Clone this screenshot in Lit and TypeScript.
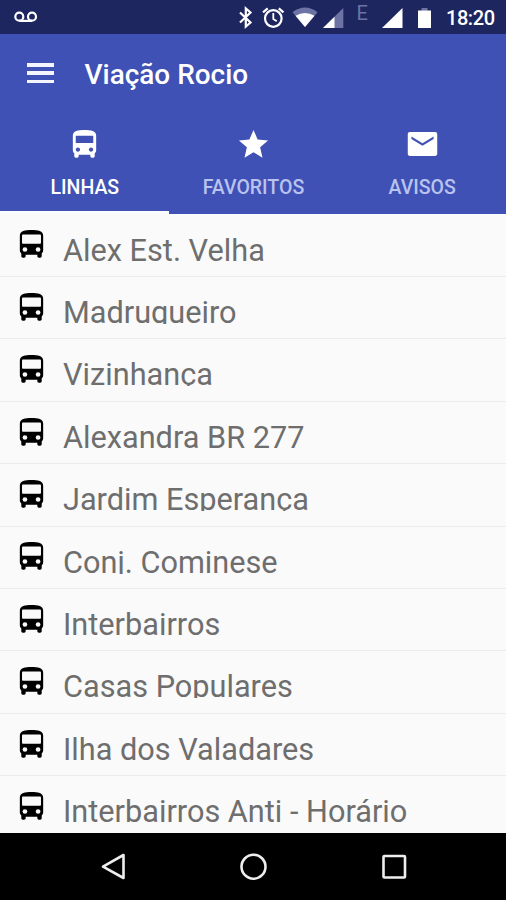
import { LitElement, html, css } from "lit";
import { customElement, property } from "lit/decorators.js";

const BUS = "M4 16c0 .88.39 1.67 1 2.22V20c0 .55.45 1 1 1h1c.55 0 1-.45 1-1v-1h8v1c0 .55.45 1 1 1h1c.55 0 1-.45 1-1v-1.78c.61-.55 1-1.34 1-2.22V6c0-3.5-3.58-4-8-4s-8 .5-8 4v10zm3.5 1c-.83 0-1.5-.67-1.5-1.5S6.67 14 7.5 14s1.5.67 1.5 1.5S8.33 17 7.5 17zm9 0c-.83 0-1.5-.67-1.5-1.5s.67-1.5 1.5-1.5 1.5.67 1.5 1.5-.67 1.5-1.5 1.5zm1.5-6H6V6h12v5z";
const STAR = "M12 17.27L18.18 21l-1.64-7.03L22 9.24l-7.19-.61L12 2 9.19 8.63 2 9.24l5.46 4.73L5.82 21z";
const MAIL = "M20.6 3.5H3.4C2.5 3.5 1.9 4.1 1.900 5v13.400c0 .9.6 1.500 1.500 1.500h17.200c.9 0 1.500-.6 1.500-1.500V5c0-.9-.6-1.500-1.500-1.500zM19.600 8.200L12 12.900 4.400 8.200V6.500L12 11.200 19.600 6.500z";

@customElement("status-bar")
export class StatusBar extends LitElement {
  static styles = css`
    :host { display: block; height: 34px; background: #1e2660; color: #fff; }
    svg { display: block; }
    text { font-family: Roboto, sans-serif; }
    .clock { font-size: 20px; font-weight: 500; }
    .net { font-size: 20px; fill: #6d74a5; }
  `;
  render() {
    return html`<svg width="506" height="34" viewBox="0 0 506 34" fill="#fff">
      <g fill="none" stroke="#fff" stroke-width="2.2">
        <circle cx="19.3" cy="16.7" r="4"></circle>
        <circle cx="32" cy="16.7" r="4"></circle>
        <path d="M19.3 20.9H32"></path>
        <path d="M240 12.5l10.5 10-4.7 4V8.5l4.7 4-10.5 10"></path>
        <circle cx="273.3" cy="18.5" r="8.3"></circle>
        <path d="M273.3 13v6l3.5 2.3" stroke-width="1.8"></path>
        <path d="M263 12.3l4.7-4M283.5 12.3l-4.7-4"></path>
      </g>
      <path d="M292.5 12.2Q305 3 317.5 12.2L305 27z" fill="#6d74a5"></path>
      <path d="M295.5 15.8Q305 10 314.5 15.8L305 27z"></path>
      <path d="M343.3 8v20H323z" fill="#6d74a5"></path>
      <path d="M334.5 16.7V28H323z"></path>
      <text class="net" x="356.5" y="19.5">E</text>
      <path d="M402.5 8v20H382z"></path>
      <path d="M421.5 8h6v3h-6z" fill="#6d74a5"></path>
      <path d="M418 10.5h13V28h-13z"></path>
      <text class="clock" x="446" y="25" textLength="49">18:20</text>
    </svg>`;
  }
}

@customElement("tab-item")
export class TabItem extends LitElement {
  @property() label = "";
  @property() path = "";
  @property({ type: Boolean, reflect: true }) active = false;
  static styles = css`
    :host { flex: 1; display: flex; flex-direction: column; align-items: center; box-sizing: border-box;
      height: 100px; padding: 13px 0 0 1px; color: #b9c3ee; font: 500 19.5px/24px Roboto, sans-serif; border-bottom: 3px solid transparent; }
    :host([active]) { color: #fff; border-bottom-color: #fcfcff; }
    svg { fill: #fff; margin-bottom: 14px; flex: none; }
  `;
  render() {
    return html`<svg width="35" height="35" viewBox="0 0 24 24"><path d=${this.path}></path></svg><span>${this.label}</span>`;
  }
}

@customElement("line-row")
export class LineRow extends LitElement {
  @property() name = "";
  static styles = css`
    :host { display: flex; box-sizing: border-box; height: 62.4px; padding-left: 14px; border-bottom: 1px solid #ececec; flex: none; }
    svg { flex: none; margin-top: 12.8px; }
    .glass, .lamp { fill: #fafafa; }
    .name { margin: 18px 0 0 14px; height: 29px; overflow: hidden; white-space: nowrap;
      color: #6e6e6e; font: 400 30.7px/36px Roboto, sans-serif; }
  `;
  render() {
    return html`<svg width="35" height="35" viewBox="0 0 24 24">
      <path d="M4 16c0 .88.39 1.67 1 2.22V20c0 .55.45 1 1 1h1c.55 0 1-.45 1-1v-1h8v1c0 .55.45 1 1 1h1c.55 0 1-.45 1-1v-1.78c.61-.55 1-1.34 1-2.22V6c0-3.5-3.58-4-8-4s-8 .5-8 4z"></path>
      <rect class="glass" x="5.5" y="5.2" width="13" height="6.2" rx=".6"></rect>
      <circle class="lamp" cx="7.5" cy="15.4" r="1.6"></circle>
      <circle class="lamp" cx="16.5" cy="15.4" r="1.6"></circle>
    </svg><span class="name">${this.name}</span>`;
  }
}

@customElement("app-root")
export class AppRoot extends LitElement {
  static styles = css`
    :host { display: flex; flex-direction: column; width: 506px; height: 900px; overflow: hidden; background: #fafafa; }
    .bar { display: flex; align-items: center; height: 80px; background: #3f51b5; flex: none; color: #fff; }
    .menu { width: 27px; height: 20px; margin: -2px 0 0 26.5px; display: flex; flex-direction: column; justify-content: space-between; }
    .menu i { height: 3.5px; background: #f4f5ff; }
    h1 { margin: 2px 0 0 31px; font: 500 27.95px/34px Roboto, sans-serif; }
    .tabs { display: flex; height: 100px; background: #3f51b5; flex: none; }
    .list { flex: 1; min-height: 0; overflow: hidden; display: flex; flex-direction: column; padding-top: .7px; }
    .nav { height: 67px; flex: none; background: #000; display: flex; justify-content: center; }
  `;
  lines = ["Alex Est. Velha", "Madrugueiro", "Vizinhança", "Alexandra BR 277", "Jardim Esperança", "Conj. Cominese",
    "Interbairros", "Casas Populares", "Ilha dos Valadares", "Interbairros Anti - Horário"];
  render() {
    return html`
      <status-bar></status-bar>
      <div class="bar"><div class="menu"><i></i><i></i><i></i></div><h1>Viação Rocio</h1></div>
      <div class="tabs">
        <tab-item label="LINHAS" .path=${BUS} active></tab-item>
        <tab-item label="FAVORITOS" .path=${STAR}></tab-item>
        <tab-item label="AVISOS" .path=${MAIL}></tab-item>
      </div>
      <div class="list">${this.lines.map((n) => html`<line-row .name=${n}></line-row>`)}</div>
      <div class="nav"><svg width="506" height="67" viewBox="0 0 506 67" fill="none" stroke="#eee" stroke-width="2.6">
        <path d="M123.5 22v23L103 33.7z" stroke-linejoin="round"></path>
        <circle cx="253.5" cy="33.7" r="12"></circle>
        <rect x="383.5" y="23" width="21.5" height="21.5" rx="1"></rect>
      </svg></div>`;
  }
}
